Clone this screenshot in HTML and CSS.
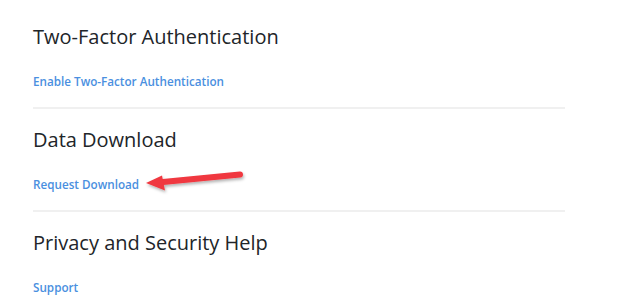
FILE: index.html
```html
<!DOCTYPE html>
<html>
<head>
<meta charset="utf-8">
<link rel="stylesheet" href="styles.css">
</head>
<body>
<main class="page">
  <section class="section">
    <h2 class="title">Two-Factor Authentication</h2>
    <a class="link" href="#">Enable Two-Factor Authentication</a>
  </section>
  <section class="section">
    <h2 class="title">Data Download</h2>
    <div class="link-row">
      <a class="link" href="#">Request Download</a>
      <svg class="arrow" width="110" height="30" viewBox="0 0 110 30">
        <defs>
          <filter id="sh" x="-20%" y="-50%" width="140%" height="200%">
            <feDropShadow dx="1" dy="2" stdDeviation="1.5" flood-color="#000" flood-opacity="0.3"/>
          </filter>
        </defs>
        <g filter="url(#sh)">
          <line x1="20" y1="15" x2="97" y2="7.5" stroke="#f0383f" stroke-width="6" stroke-linecap="round"/>
          <polygon points="3,16 19,8.5 22,23.5" fill="#f0383f"/>
        </g>
      </svg>
    </div>
  </section>
  <section class="section last">
    <h2 class="title">Privacy and Security Help</h2>
    <a class="link" href="#">Support</a>
  </section>
</main>
</body>
</html>
```
FILE: styles.css
```css
html, body {
  margin: 0;
  padding: 0;
  background: #fff;
}
.page {
  width: 532px;
  margin-left: 33px;
  padding-top: 6px;
  font-family: "Open Sans", "Noto Sans", sans-serif;
}
.section {
  padding: 17px 0 18px;
  border-bottom: 2px solid #f0f0f0;
}
.section.last {
  border-bottom: none;
}
.title {
  margin: 0 0 22px;
  font-size: 20px;
  line-height: 28px;
  font-weight: 400;
  color: #212529;
}
.link {
  display: block;
  font-size: 11.7px;
  line-height: 16px;
  font-weight: 600;
  color: #4a8fe0;
  text-decoration: none;
}
.link-row {
  position: relative;
}
.arrow {
  position: absolute;
  left: 110px;
  top: -9px;
}
```
